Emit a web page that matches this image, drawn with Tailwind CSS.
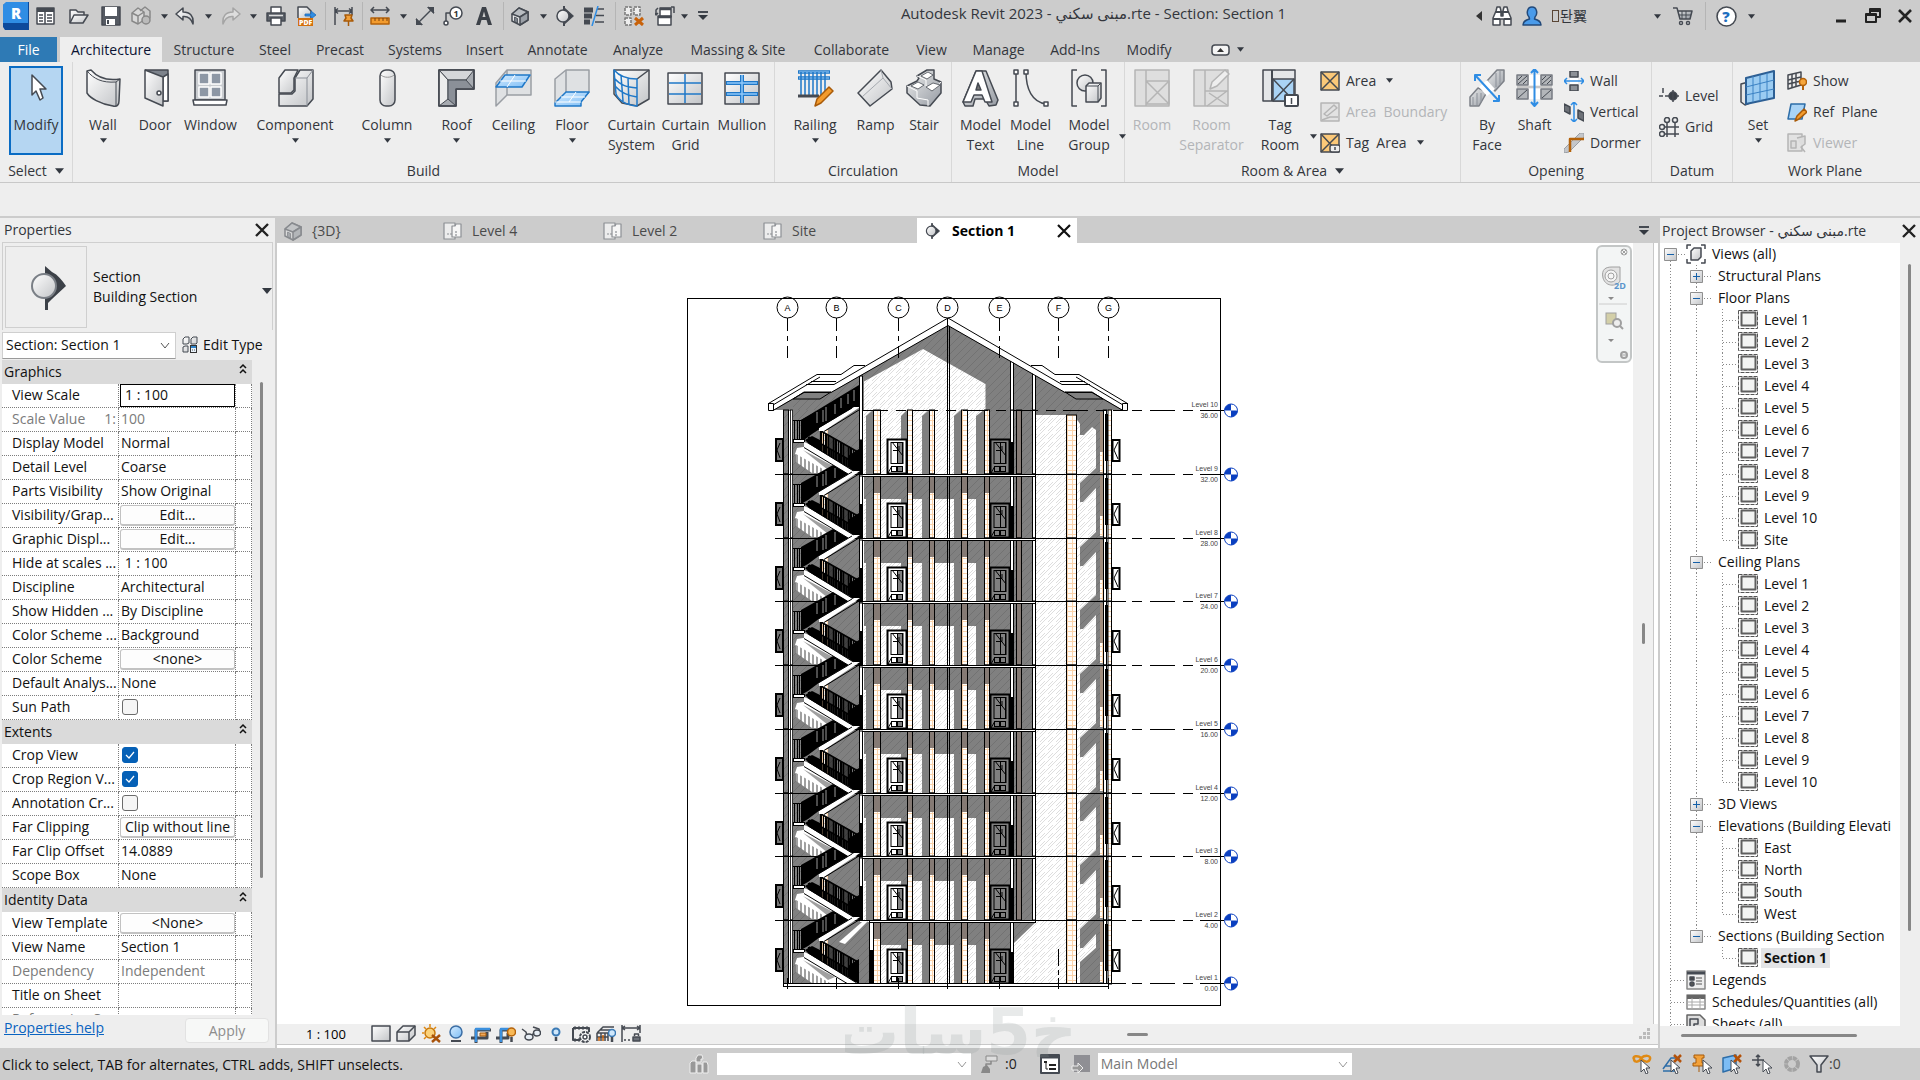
<!DOCTYPE html>
<html lang="en">
<head>
<meta charset="utf-8">
<title>Autodesk Revit 2023</title>
<script src="https://cdn.jsdelivr.net/npm/@tailwindcss/browser@4"></script>
</head>
<body class="bg-[#eeeeee]">
<svg class="absolute h-0 w-0" aria-hidden="true">
  <defs>
    <linearGradient id="lg" x1="0" y1="0" x2="1" y2="1"><stop offset="0" stop-color="#ffffff"/><stop offset="1" stop-color="#c2c4c7"/></linearGradient>
    <linearGradient id="dg" x1="0" y1="0" x2="1" y2="1"><stop offset="0" stop-color="#eceded"/><stop offset="1" stop-color="#969ba3"/></linearGradient>
    <linearGradient id="bg" x1="0" y1="0" x2="1" y2="1"><stop offset="0" stop-color="#d6ecff"/><stop offset="1" stop-color="#7dbdf5"/></linearGradient>
  </defs>
</svg>
<div class="flex h-screen flex-col overflow-hidden font-['Open_Sans','DejaVu_Sans','Noto_Sans_CJK_KR',sans-serif] text-[14px] leading-5 text-[#33363c]">

  <header class="shrink-0 bg-[#cccccc]">
    <div class="flex h-[37px] items-start">
      <div id="quick" class="flex h-8 shrink-0 items-center"></div>
      <h1 class="h-[26px] flex-1 text-center text-[15px] leading-[26px] whitespace-nowrap">Autodesk Revit 2023 - مبنى سكني.rte - Section: Section 1</h1>
      <div id="account" class="flex h-8 shrink-0 items-center"></div>
    </div>
    <nav id="tabs" class="flex h-[25px] items-stretch"></nav>
  </header>

  <section class="h-[154px] shrink-0">
    <div id="ribbon" class="flex h-[121px] border-b border-[#c8c8c8]"></div>
  </section>

  <main class="flex min-h-0 flex-1 border-t-2 border-[#cccccc]">
    <aside class="flex w-[277px] shrink-0 flex-col border-r-2 border-[#cccccc] text-[#111111]">
      <div class="flex h-6 shrink-0 items-center justify-between pr-[5px] pl-1 text-[#33363c]">
        <h2>Properties</h2>
        <button aria-label="Close properties"><svg class="h-4 w-4" viewBox="0 0 16 16"><path d="M2 2L14 14M14 2L2 14" stroke="#222" stroke-width="2.4"/></svg></button>
      </div>
      <div class="mx-[2px] flex h-[88px] shrink-0 items-center border border-b-0 border-[#cfcfcf]">
        <div class="ml-[2px] flex h-[82px] w-[82px] shrink-0 items-center justify-center border border-[#cfcfcf]">
          <svg class="h-12 w-12" viewBox="0 0 48 48"><path d="M23 3L30 9C36 12 40 17 44 23L30 36L26 40V47H23Z" fill="#3c4148"/><circle cx="22" cy="23" r="12" fill="url(#lg)" stroke="#7a7f86" stroke-width="2"/></svg>
        </div>
        <div class="ml-[6px] flex-1">Section<br>Building Section</div>
        <button aria-label="Change type" class="mt-2"><svg class="h-2 w-2.5" viewBox="0 0 10 8"><path d="M0 1H10L5 7Z" fill="#333840"/></svg></button>
      </div>
      <div class="flex h-[30px] shrink-0 items-center">
        <div class="relative ml-[2px] w-[174px]">
          <select aria-label="Instance" class="h-[27px] w-full appearance-none border border-[#cfcfcf] border-b-[#9a9a9a] bg-white pl-[3px]"><option>Section: Section 1</option></select>
          <svg class="pointer-events-none absolute top-2.5 right-1.5 h-2 w-2.5" viewBox="0 0 10 8"><path d="M1 1L5 6L9 1" fill="none" stroke="#555"/></svg>
        </div>
        <button class="ml-[5px] flex items-center gap-1 whitespace-nowrap"><svg class="h-[18px] w-[18px]" viewBox="0 0 18 18"><path d="M2 3L4 1H8V7L6 8H2ZM10 3L12 1H16V7L15 8H10ZM2 11L4 10H7V16H2Z" fill="url(#lg)" stroke="#444a52"/><rect x="9.500" y="9.500" width="6" height="7" fill="#e8f2fb" stroke="#333"/><path d="M10 11H15" stroke="#2f83c9" stroke-width="2"/><path d="M11 14H15" stroke="#555" stroke-dasharray="1 1"/></svg>Edit Type</button>
      </div>
      <div class="flex min-h-0 flex-1">
        <div class="ml-[2px] w-[250px] shrink-0 overflow-hidden bg-white">
          <table class="w-full table-fixed border-separate border-spacing-0 text-left font-normal">
            <colgroup><col class="w-[117px]"><col class="w-[117px]"><col></colgroup>
            <tbody id="props"></tbody>
          </table>
        </div>
        <div class="flex-1 pt-[22px] pl-2"><div class="h-[496px] w-[3px] rounded bg-[#878787]"></div></div>
      </div>
      <div class="flex h-[33px] shrink-0 items-center justify-between pr-[6px] pl-1">
        <a href="#help" class="-mt-2 text-[#0a63c0] underline">Properties help</a>
        <button disabled class="-mt-0.5 h-[25px] w-[84px] rounded border border-[#e2e2e2] bg-[#f7f8f7] text-[#8d8d8d]">Apply</button>
      </div>
    </aside>

    <section class="flex min-w-0 flex-1 flex-col">
      <div id="views" class="flex h-[25px] shrink-0 items-stretch bg-[#cccccc]"></div>
      <div class="flex min-h-0 flex-1">
        <div class="relative min-w-0 flex-1 bg-white">
          <svg id="drawing" class="h-full w-full" viewBox="277 243 1356 781" preserveAspectRatio="xMidYMid meet"></svg>
          <div class="absolute top-[2px] right-[1px] flex h-[118px] w-9 flex-col items-center rounded-md border-2 border-[#c3c6c6] bg-[#f3f5f5]">
            <svg class="h-[114px] w-8" viewBox="0 0 32 114" fill="none" stroke="#a0a0a0"><circle cx="26" cy="5" r="3"/><path d="M24 3L28 7M28 3L24 7M24 108H28"/><circle cx="26" cy="108" r="3" stroke-width="2"/><path d="M5 31C3 22 8 20 14 20H22V34C20 39 8 41 5 31Z" fill="#e2e2e2"/><circle cx="13" cy="29" r="6" fill="#f5f5f5"/><circle cx="13" cy="29" r="3"/><text x="16" y="42" font-size="9" font-weight="700" fill="#5b95cc" stroke="none">2D</text><path d="M10 50H16L13 53ZM10 92H16L13 95Z" fill="#8a8a8a" stroke="none"/><path d="M1 57H29" stroke="#ccc"/><rect x="8" y="66" width="10" height="11" fill="#d3cfa8"/><circle cx="19" cy="76" r="4" fill="#eee" stroke-width="2"/><path d="M22 79L25 82" stroke-width="2"/></svg>
          </div>
        </div>
        <div class="flex w-[21px] shrink-0 items-center justify-center border-r border-[#c8c8c8] bg-[#f0f0f0]"><div class="h-[21px] w-[3px] rounded bg-[#878787]"></div></div>
        <div class="w-1 bg-white"></div>
      </div>
      <div class="flex h-[21px] shrink-0 items-center border-b border-[#c8c8c8] bg-[#efefef]">
        <div class="w-[91px] pl-[29px] text-[13px] whitespace-nowrap text-black">1 : 100</div>
        <div id="viewbar" class="flex"></div>
        <div class="ml-[484px] h-[3px] w-[21px] rounded bg-[#878787]"></div>
        <svg class="mr-2 ml-auto h-3 w-3" viewBox="0 0 12 12" fill="#bbb"><path d="M9 0h3v3h-3zM9 4h3v3h-3zM9 8h3v3h-3zM5 4h3v3h-3zM5 8h3v3h-3zM1 8h3v3h-3z"/></svg>
      </div>
      <div class="h-[3px] shrink-0 bg-white"></div>
    </section>

    <aside class="flex w-[262px] shrink-0 flex-col border-l-2 border-[#cccccc] text-[#111111]">
      <div class="flex h-[25px] shrink-0 items-center justify-between pr-[3px] pl-[2px] text-[#33363c]">
        <h2 class="whitespace-nowrap">Project Browser - مبنى سكني.rte</h2>
        <button aria-label="Close project browser"><svg class="h-4 w-4" viewBox="0 0 16 16"><path d="M2 2L14 14M14 2L2 14" stroke="#222" stroke-width="2.4"/></svg></button>
      </div>
      <div class="flex min-h-0 flex-1">
        <ul id="tree" class="w-[240px] shrink-0 overflow-hidden bg-white"></ul>
        <div class="flex-1 pt-[21px] pl-2"><div class="h-[667px] w-[3px] rounded bg-[#878787]"></div></div>
      </div>
      <div class="h-[22px] shrink-0 pt-2 pl-[21px]"><div class="h-[3px] w-[176px] rounded bg-[#878787]"></div></div>
    </aside>
  </main>

  <footer class="relative flex h-8 shrink-0 items-center bg-[#cccccc] text-[#111111]">
    <p class="w-[688px] shrink-0 pt-0.5 pl-[2px] whitespace-nowrap">Click to select, TAB for alternates, CTRL adds, SHIFT unselects.</p>
    <div id="status" class="flex flex-1 items-center"></div>
    <div dir="rtl" class="pointer-events-none absolute -top-[51px] left-[845px] h-[60px] w-[232px] overflow-hidden text-center font-['DejaVu_Sans',sans-serif] text-[64px] leading-[70px] font-bold text-[#8a9494]/20">خ5سات</div>
  </footer>
</div>

<script>
const svg = (cls, box, body) => `<svg class="${cls} shrink-0" viewBox="0 0 ${box}" fill="none" stroke="#454a52" stroke-width="1.5" stroke-linejoin="round">${body}</svg>`;
const s20 = b => svg('h-5 w-5', '20 20', b);
const L = 'fill="url(#lg)"', D = 'fill="url(#dg)"', B = 'fill="url(#bg)"', BL = 'stroke="#1f78c8"';
const caret = (cls) => `<svg class="${cls} shrink-0" viewBox="0 0 8 5"><path d="M0 0H8L4 5Z" fill="#333840"/></svg>`;
const caretBtn = w => `<button aria-label="More" class="${w} flex justify-center">${caret('h-[5px] w-[7px]')}</button>`;
const btn = (w, label, icon) => `<button aria-label="${label}" class="${w} flex justify-center">${icon}</button>`;
const sep = '<div class="mx-[2px] h-7 w-px border-r border-[#b5b5b5] pr-px"></div>';
const house = `<path d="M2 8L9 2L18 6V14L10 19L2 15Z" ${L}/><path d="M2 8L9 2L18 6L10 11Z" fill="#b9bdc2"/><path d="M10 11L18 6V14L10 19Z" fill="#9ca1a8"/><path d="M4.500 11L7.500 12.500V17L4.500 15.500Z" fill="#7d838c" stroke-width=".8"/>`;
const section = `<path d="M10 0V20" stroke-width="2"/><path d="M10 2L19 10L10 18Z" fill="#3c4148"/><circle cx="9" cy="10" r="6" ${L}/>`;

document.getElementById('quick').innerHTML = [
  btn('w-8', 'Revit menu', svg('h-[28px] w-[26px]', '26 28', '<path d="M0 3L4 0H26V28H2L0 25Z" fill="#0d4a9b" stroke="none"/><path d="M0 3L3 0H25V21H0Z" fill="#2f8de4" stroke="none"/><text x="8" y="17" font-size="15" font-weight="800" fill="#fff" stroke="none">R</text>')),
  btn('w-7', 'Home', s20(`<rect x="1" y="2" width="17" height="16" fill="#fff"/><path d="M1 4H18" stroke-width="4"/><path d="M3 9H7M3 12H7M3 15H7M9 5V18" /><path d="M11 9H16M11 12H16M11 15H16"/>`)),
  btn('w-[38px]', 'Open', s20(`<path d="M1 17V4H7L9 6H15V9" ${L}/><path d="M1 17L5 9H19L14 17Z" ${L}/>`)),
  btn('w-[26px]', 'Save', s20(`<path d="M1 1H19V19H1Z" fill="#555a62"/><rect x="4" y="1" width="12" height="9" fill="#fff" stroke="none"/><rect x="5" y="13" width="9" height="6" fill="#fff" stroke="none"/><path d="M7 14V18" stroke-width="2"/>`)),
  btn('w-[34px]', 'Synchronize', s20(`<g stroke="#888"><path d="M1 7L7 2L13 6V14L7 18L1 15Z" fill="#d8d8d8"/><path d="M1 7L7 10L13 6M7 10V18M9 5L14 1L19 5V12L14 16"/><circle cx="15" cy="14" r="4" fill="#bbb"/></g>`)),
  caretBtn('w-3'),
  btn('w-[30px]', 'Undo', s20(`<path d="M1 8L8 2V6C15 6 19 10 18 18C16 12 13 10 8 10.500V14Z" ${L}/>`)),
  caretBtn('w-4'),
  btn('w-[30px]', 'Redo', s20(`<path d="M19 8L12 2V6C5 6 1 10 2 18C4 12 7 10 12 10.500V14Z" fill="#ddd" stroke="#a5a5a5"/>`)),
  caretBtn('w-[14px]'),
  btn('w-[31px]', 'Print', s20(`<path d="M5 7V1H15V7" fill="#fff"/><path d="M1 7H19V15H1Z" fill="#5b6068"/><path d="M5 12H15V19H5Z" fill="#fff"/><path d="M3 9.500H17" stroke="#ddd"/>`)),
  btn('w-[31px]', 'Export PDF', s20(`<path d="M1 12V1H10L14 5V12" ${L}/><path d="M8 8H14V5L19 9L14 13V10H8Z" fill="#2f8de4" stroke="#1f6bb5" stroke-width=".8"/><rect x="1" y="12" width="15" height="8" fill="#d4700c" stroke="none"/><text x="2" y="19" font-size="7" font-weight="800" fill="#fff" stroke="none">PDF</text>`)),
  sep,
  btn('w-[31px]', 'Aligned dimension', s20(`<path d="M1 1V19M18 1V9M1 5H18M4 2.500L1 5L4 7.500M15 2.500L18 5L15 7.500"/><path d="M11 9H18L17 12L19 15H10L12 12ZM14.500 15V20" fill="#f2a13a" stroke="#a85a08"/>`)),
  sep,
  btn('w-[29px]', 'Measure', s20(`<path d="M1 4H19M4 1L1 4L4 7M16 1L19 4L16 7"/><rect x="1" y="12" width="18" height="6" fill="#f29b2e" stroke="#b4620a"/><path d="M5 12V15M9 12V15M13 12V15M17 12V15" stroke="#7c430a" stroke-width="1"/>`)),
  caretBtn('w-[18px]'),
  btn('w-[26px]', 'Dimension', s20(`<path d="M3 17L17 3"/><path d="M1 19V12L8 19ZM19 1H12L19 8Z" fill="#454a52" stroke="none"/><path d="M1 13L7 19M13 1L19 7"/>`)),
  btn('w-[30px]', 'Tag', s20(`<circle cx="13" cy="7" r="6" fill="#fff"/><path d="M7 7H3V15"/><circle cx="3" cy="17" r="2" fill="#fff"/><text x="10.500" y="10.500" font-size="9" font-weight="700" fill="#333" stroke="none">1</text>`)),
  btn('w-[32px]', 'Text', s20(`<path d="M2 19L8 1H12L18 19H14L12.500 14H7.500L6 19Z" fill="#3c4148" stroke="none"/><path d="M8.500 11L10 5.500L11.500 11Z" fill="#ccc" stroke="none"/>`)),
  sep,
  btn('w-7', '3D view', s20(house)),
  caretBtn('w-[18px]'),
  btn('w-6', 'Section', s20(section)),
  btn('w-[36px]', 'Thin lines', s20(`<path d="M0 4H9M0 10H8M0 16H6" stroke-width="5"/><path d="M13 3H20M12 9.500H20M11 16H20"/><path d="M14 0L8 20" stroke="#2f8de4"/>`)),
  sep,
  btn('w-[32px]', 'Close inactive views', s20(`<path d="M1 1H7V9H1ZM10 1H16V9H10ZM1 12H7V19H1Z" stroke="#777" fill="#eee" stroke-dasharray="3 1"/><path d="M11 12L19 19M19 12L11 19" stroke="#c8620a" stroke-width="3"/>`)),
  btn('w-[30px]', 'Switch windows', s20(`<rect x="5" y="2" width="11" height="9" fill="#fff"/><path d="M5 3H16" stroke-width="2.500"/><rect x="3" y="10" width="13" height="9" fill="#fff"/><path d="M3 11H16" stroke-width="2.500"/><path d="M1 9V4L3 2M0 7L1 9L3 7M16 1H19V7"/>`)),
  caretBtn('w-[9px]'),
  btn('w-7', 'Customize', svg('h-[10px] w-[10px]', '10 10', '<path d="M0 1H10" stroke-width="2"/><path d="M0 4H10L5 9Z" fill="#333840" stroke="none"/>')),
].join('');

document.getElementById('account').innerHTML = [
  btn('w-[18px]', 'Collapse search', svg('h-[10px] w-[6px]', '6 10', '<path d="M6 0V10L0 5Z" fill="#333" stroke="none"/>')),
  btn('w-[28px]', 'Search', svg('h-5 w-5', '20 20', `<path d="M4 5L5 1H8L9 5V10H11V5L12 1H15L16 5L19 12V19H12V13H8V19H1V12Z" fill="#fff"/><path d="M1 13H8M12 13H19M3 6H9M11 6H17M10 5V10" stroke-width="2"/>`)),
  btn('w-[32px]', 'Sign in', s20(`<path d="M1 19C1 15 4 14 7.500 13L7 11C4 8 5 1 10 1C15 1 16 8 13 11L12.500 13C16 14 19 15 19 19Z" fill="#4a9bea" stroke="#234a7a"/>`)),
  '<a href="#account" class="flex h-5 w-[102px] items-center pl-1 text-[14px] leading-5"><span class="mr-px inline-block h-3 w-[7px] border border-[#5a4636]"></span>돤翼</a>',
  caretBtn('w-[14px]'),
  btn('w-[38px]', 'App store', s20(`<path d="M0 2H4L7 13H17L19 5H5" ${D}/><path d="M6 9H18M9 5V13M13 5V13" stroke-width="1"/><circle cx="8" cy="17" r="1.500" fill="#fff"/><circle cx="15" cy="17" r="1.500" fill="#fff"/>`)),
  sep,
  btn('w-[36px]', 'Help', svg('h-[21px] w-[21px]', '20 20', `<circle cx="10" cy="10" r="9" fill="#fff"/><text x="6" y="15" font-size="14" font-weight="800" fill="#1f6fc0" stroke="none">?</text>`)),
  caretBtn('w-[14px]'),
  '<div class="w-[68px]"></div>',
  btn('w-[30px]', 'Minimize', svg('h-4 w-4', '16 16', '<path d="M3 13H13" stroke="#222" stroke-width="3"/>')),
  btn('w-[34px]', 'Restore', svg('h-4 w-4', '16 16', '<path d="M5 5V1H15V9H11M5 3H15" stroke="#222" stroke-width="2"/><path d="M1 6H11V14H1ZM1 7H11" stroke="#222" stroke-width="2"/>')),
  btn('w-[30px]', 'Close', svg('h-4 w-4', '16 16', '<path d="M2 2L14 14M14 2L2 14" stroke="#222" stroke-width="2.600"/>')),
].join('');

document.getElementById('tabs').innerHTML =
  '<button class="w-[57px] bg-[#2e7ab5] text-white">File</button><button class="ml-[3px] w-[102px] bg-[#eeeeee] text-[#0b1233]">Architecture</button>' +
  [['w-[84px]','Structure'],['w-[58px]','Steel'],['w-[72px]','Precast'],['w-[78px]','Systems'],['w-[61px]','Insert'],['w-[85px]','Annotate'],['w-[76px]','Analyze'],['w-[124px]','Massing &amp; Site'],['w-[103px]','Collaborate'],['w-[57px]','View'],['w-[77px]','Manage'],['w-[76px]','Add-Ins'],['w-[72px]','Modify']]
    .map(([w, t]) => `<button class="${w} whitespace-nowrap">${t}</button>`).join('') +
  `<button aria-label="Ribbon display" class="ml-[26px] flex items-center gap-[7px]">${svg('h-3 w-[19px]', '19 12', '<rect x="1" y="1" width="17" height="10" rx="3" fill="#f4f4f4"/><path d="M6 8H13L9.500 4Z" fill="#333" stroke="none"/>')}${caret('h-[5px] w-[7px]')}</button>`;

const big = {
  modify: `<path d="M14 6V26L18 22L22 31L25 29L22 20H28Z" fill="#fff"/>`,
  wall: `<path d="M2 2L6 1C12 8 22 12 35 10L34 32C34 36 32 38 28 37C15 35 5 29 2 24Z" ${L}/><path d="M2 2C9 10 17 14 31 13V37M31 13L35 10" stroke-width="1"/>`,
  door: `<path d="M8 1H31V32H26" fill="#7d838c"/><path d="M26 8L31 5V32H26Z" fill="#fff"/><path d="M8 1L26 8V37L8 29Z" ${L}/><circle cx="22" cy="24" r="2" fill="#fff"/>`,
  window: `<rect x="3" y="1" width="30" height="30" fill="#c9ccd0"/><path d="M7 4H17V15H7ZM19 4H29V15H19ZM7 18H17V28H7ZM19 18H29V28H19Z" fill="#8d97a5" stroke="#fff"/><path d="M1 31H35L34 36H2Z" fill="#fff"/>`,
  component: `<path d="M2 9L8 1H21L17 9V21L14 24H2Z" ${L}/><path d="M2 25H15L18 22V9L23 1H36V30L30 37H2Z" ${L}/><path d="M18 9H30V37M30 9L36 1" stroke="#8b9098" stroke-width="1"/>`,
  column: `<rect x="11" y="1" width="15" height="36" rx="6" ${L}/><path d="M12 6C15 9 22 9 25 6" stroke="#999" stroke-width="1"/>`,
  roof: `<path d="M1 1H36V20H18V37H1Z" fill="#a7abb1"/><path d="M1 1H36L28 11H10Z" fill="#d5d7da" stroke-width="1"/><path d="M1 1L10 11V30L1 37Z" fill="#eceded" stroke-width="1"/><path d="M28 11L36 20H18V37L10 30V11Z" fill="#8b9098" stroke-width="1"/><path d="M1 1H36V20H18V37H1Z"/>`,
  ceiling: `<path d="M1 14L12 1H36V26H12L1 37Z" fill="#dfe1e3" stroke="#9a9ea4"/><path d="M12 1V26" stroke="#9a9ea4"/><path d="M1 18L10 6H35L27 18Z" ${B} ${BL}/><path d="M5 12H31M12 18L20 6" stroke="#fff" stroke-width="1"/>`,
  floor: `<path d="M1 10L12 1H35V23L26 33H1Z" fill="#dfe1e3" stroke="#9a9ea4"/><path d="M12 1V23" stroke="#9a9ea4"/><path d="M1 34L12 23H35L27 33V37H1Z" ${B} ${BL}/><path d="M1 33H27M7 28H31M15 33L22 23" stroke="#fff" stroke-width="1"/>`,
  csys: `<path d="M1 1H36V30L24 37L9 34L1 25Z" ${L}/><path d="M24 10L36 1"/><path d="M1 1C7 8 14 10 24 10V37C14 36 6 32 3 25ZM1 9C8 17 14 18 24 19M2 17C9 25 16 27 24 28M8 6L10 32M15 9L16 36" ${BL}/>`,
  cgrid: `<rect x="1" y="4" width="34" height="31" ${L}/><path d="M18 5V34M2 14H34M2 25H34" ${BL}/>`,
  mullion: `<rect x="1" y="4" width="34" height="31" ${L}/><path d="M18 6V34M2 14H34M2 25H34" stroke="#1f78c8" stroke-width="4"/><path d="M18 6V34M3 14H33M3 25H33" stroke="#8fc8fa"/>`,
  railing: `<path d="M1 3H33M1 9H33" stroke="#1f78c8" stroke-width="3.500"/><path d="M2 3H32M2 9H32" stroke="#a5d2fa" stroke-width="1"/><path d="M4 3V26M8 3V26M12 3V26M16 3V26M20 3V26M24 3V26M28 3V24" stroke="#1f78c8" stroke-width="1.500"/><path d="M1 27H22" stroke-width="3"/><path d="M18 37L20 30L32 18L36 22L24 34Z" fill="#f29b2e" stroke="#a85a08"/>`,
  ramp: `<path d="M1 24L24 1L34 13L35 20L13 37Z" ${L}/><path d="M24 1L26 9L35 20M26 9L5 28" stroke="#a5a9af" stroke-width="1"/>`,
  stair: `<path d="M1 17L11 12L13 9L11 7L21 1H28V10L35 13V24L24 37L14 36L1 24Z" ${D}/><path d="M1 17L11 22V29L22 31V37M11 7L20 11L20 17L29 20L35 13" stroke="#fff" stroke-width="1"/><path d="M5 17L12 13L18 16L12 20ZM15 7L22 3L27 6L21 10Z" fill="#fff" stroke-width=".8"/><path d="M20 18L27 14L34 16L26 22Z" fill="#fff" stroke-width=".8"/>`,
  mtext: `<path d="M1 33L14 2H24L36 31L34 36L27 37L23 30H13L11 37H3Z" ${D}/><path d="M1 33L14 2H20L30 33H23L20 26H12L9 33Z" fill="#fff"/><path d="M14 21L16 14L19 21Z" fill="#777"/>`,
  mline: `<path d="M4 3V34M14 3C14 20 20 33 34 35"/><path d="M2 1H6V5H2ZM12 1H16V5H12ZM2 33H6V37H2ZM32 33H36V37H32Z" fill="#fff"/>`,
  mgroup: `<path d="M6 1H1V37H6M30 1H35V37H30"/><circle cx="14" cy="14" r="8" ${L}/><path d="M15 17L18 14H30V29L27 33H15Z" ${L}/><path d="M15 17H27V33M27 17L30 14" stroke-width="1"/>`,
  room: `<g stroke="#b5b5b5"><rect x="1" y="1" width="34" height="36" fill="#dedede"/><path d="M12 1V37M12 12H35V35H12ZM12 12L35 35M35 12L12 35"/></g>`,
  rsep: `<g stroke="#b5b5b5"><rect x="1" y="1" width="34" height="36" fill="#dedede"/><path d="M12 1V37M12 22H35M14 37L34 22M16 24L34 36"/><path d="M17 20L19 13L32 1L36 5L24 17Z" fill="#eee"/></g>`,
  tag: `<rect x="1" y="1" width="32" height="31" fill="#e4e6e8"/><path d="M10 1V32" stroke-width="2"/><path d="M11 10H32V32H11Z" fill="#a9d3f5"/><path d="M11 10L32 32M32 10L11 32"/><rect x="23" y="26" width="13" height="11" rx="1" fill="#fff" stroke-width="2"/><path d="M29.500 29V35"/>`,
  byface: `<path d="M1 28L9 19L18 23L10 37H1Z" ${D} stroke="#7d8188"/><path d="M18 12L28 1H35V12L26 22Z" ${D} stroke="#7d8188"/><path d="M4 28V36M8 24V36M12 24V33M27 4V18M31 2V15" stroke="#8b9098" stroke-width="1"/><path d="M10 18L18 11L26 20L18 27Z" fill="#fff" stroke="none"/><path d="M6 6L30 32M6 12V6H12M30 26V32H24" stroke="#2f8de4" stroke-width="2"/>`,
  shaft: `<path d="M1 6H12V16H1ZM25 6H36V16H25ZM1 20H12V30H1ZM25 20H36V30H25Z" fill="#b3b6ba" stroke="#777b82"/><path d="M2 15L11 7M2 29L11 21M26 15L35 7M26 29L35 21M2 11L6 7M7 15L11 11M26 11L30 7M31 15L35 11" stroke-width="1"/><path d="M1 18H36" stroke="#bbb"/><rect x="13" y="6" width="11" height="10" fill="#fff" stroke="none"/><rect x="13" y="20" width="11" height="10" fill="#fff" stroke="none"/><path d="M18.500 1V36M15 4L18.500 0L22 4M15 33L18.500 37L22 33" stroke="#2f8de4" stroke-width="2"/>`,
  set: `<path d="M1 15L12 12V33L5 36L1 33Z" fill="#e5e5e5"/><path d="M6 9L34 2V29L6 35Z" fill="#9bccf2" stroke="#2d5f94" stroke-width="2"/><path d="M13 7V33M20 6V32M27 4V30M6 18L34 11M6 26L34 20" stroke="#3b82c4" stroke-width="1"/>`,
};
const small = {
  area: `<rect x="1" y="1" width="18" height="18" fill="#fbc878"/><path d="M1 1L19 19M19 1L1 19"/>`,
  abound: `<g stroke="#b5b5b5"><rect x="1" y="1" width="18" height="18" fill="#e2e2e2"/><path d="M4 12L14 3L17 6L7 14ZM2 18L10 15H18"/></g>`,
  tarea: `<rect x="1" y="1" width="18" height="18" fill="#fbc878"/><path d="M1 1L14 15M19 1L1 19"/><rect x="10" y="12" width="10" height="7" rx="2" fill="#eee"/><path d="M15 14V17"/>`,
  owall: `<path d="M6 0H14V6H6ZM6 14H14V20H6Z" fill="#8c9096"/><rect x="6" y="7" width="8" height="6" fill="#fff" stroke="none"/><path d="M0 10H20M3 7L0 10L3 13M17 7L20 10L17 13" stroke="#2f8de4"/>`,
  overt: `<path d="M0 2L6 5V12L0 9ZM14 8L20 11V19L14 16Z" fill="#6d7178"/><path d="M10 0V20M7 3L10 0L13 3M7 17L10 20L13 17" stroke="#2f8de4"/>`,
  odorm: `<path d="M0 20V16L16 0H20V4L5 19Z" fill="#c3c6ca" stroke="#9a9ea4" stroke-width="1"/><path d="M6 19V6H20" stroke="#b4620a" stroke-width="2.500"/>`,
  level: `<path d="M0 10H20" stroke-dasharray="4 2"/><circle cx="14" cy="10" r="4" fill="#3c4148"/><path d="M14 4V16M4 2V7"/>`,
  grid: `<circle cx="8" cy="3" r="2.500"/><circle cx="16" cy="3" r="2.500"/><circle cx="3" cy="10" r="2.500"/><circle cx="3" cy="17" r="2.500"/><path d="M8 6V20M16 6V20M6 10H20M6 17H20"/>`,
  show: `<path d="M1 4L14 1V14L1 18Z" fill="#eee"/><path d="M5 3V17M9 2V16M1 9L14 6M1 13L14 10"/><circle cx="16" cy="11" r="3.500" fill="#f6a63c" stroke="#b4620a"/><path d="M16 15V19" stroke="#b4620a" stroke-width="2"/>`,
  refp: `<path d="M4 2H18L15 17H1Z" fill="#a9d3f5" stroke="#2d6da8"/><path d="M8 19L10 14L17 7L20 10L12 17Z" fill="#f29b2e" stroke="#a85a08"/>`,
  viewer: `<g stroke="#b5b5b5"><rect x="1" y="1" width="14" height="17" fill="#e2e2e2"/><path d="M10 5L18 3V11L14 14L18 19M4 8H9V15H4Z" fill="#ddd"/></g>`,
};
const bigBtn = ([w, icon, label, o = '']) => {
  const dis = o.includes('d');
  return `<button ${dis ? 'disabled' : ''} class="${w} relative flex shrink-0 flex-col items-center whitespace-nowrap ${dis ? 'text-[#b3b5b8]' : ''}">${svg('h-[38px] w-[37px]', '37 38', big[icon])}<span class="mt-2">${label}</span>${o.includes('c') ? caret('mt-[3px] h-[5px] w-[7px]') : ''}${o.includes('r') ? '<span class="absolute -right-1 bottom-4">' + caret('h-[5px] w-[7px]') + '</span>' : ''}</button>`;
};
const smBtn = ([icon, label, o = '']) =>
  `<button ${o.includes('d') ? 'disabled' : ''} class="flex h-[31px] items-center gap-[6px] whitespace-nowrap ${o.includes('d') ? 'text-[#b3b5b8]' : ''}">${s20(small[icon])}<span>${label}</span>${o.includes('c') ? caret('ml-1 h-[5px] w-[7px]') : ''}</button>`;
const panel = (w, pad, bigs, smalls, title, scls = '', c = false, edge = 'border-r') =>
  `<div class="${w} ${edge} flex shrink-0 flex-col border-[#d8d8d8]"><div class="flex h-[99px] items-start ${pad}">${bigs.map(b => bigBtn(b)).join('')}${smalls.length ? `<div class="flex flex-col ${scls}">${smalls.map(smBtn).join('')}</div>` : ''}</div><div class="flex items-center justify-center gap-2 leading-5">${title}${c ? caret('h-[6px] w-[9px]') : ''}</div></div>`;
document.getElementById('ribbon').innerHTML =
  `<div class="flex w-[73px] shrink-0 flex-col items-center border-r border-[#d8d8d8]"><div class="flex h-[99px] items-start pt-1"><button class="flex h-[89px] w-[54px] flex-col items-center border-2 border-[#0a6cc4] bg-[#b5d6f2] pt-px whitespace-nowrap">${svg('h-[38px] w-[37px]', '37 38', big.modify)}<span class="mt-2">Modify</span></button></div><div class="flex items-center gap-2">Select ${caret('h-[6px] w-[9px]')}</div></div>` +
  panel('w-[702px]', 'pt-[7px] pl-[6px]', [['w-[48px]','wall','Wall','c'],['w-[56px]','door','Door'],['w-[55px]','window','Window'],['w-[114px]','component','Component','c'],['w-[70px]','column','Column','c'],['w-[69px]','roof','Roof','c'],['w-[45px]','ceiling','Ceiling'],['w-[72px]','floor','Floor','c'],['w-[47px]','csys','Curtain<br>System'],['w-[61px]','cgrid','Curtain<br>Grid'],['w-[52px]','mullion','Mullion']], [], 'Build') +
  panel('w-[177px]', 'pt-[7px] pl-[5px]', [['w-[70px]','railing','Railing','c'],['w-[51px]','ramp','Ramp'],['w-[46px]','stair','Stair']], [], 'Circulation') +
  panel('w-[173px]', 'pt-[7px] pl-[4px]', [['w-[49px]','mtext','Model<br>Text'],['w-[51px]','mline','Model<br>Line'],['w-[66px]','mgroup','Model<br>Group','r']], [], 'Model') +
  panel('w-[336px]', 'pt-[7px] pl-[3px]', [['w-[48px]','room','Room','d'],['w-[71px]','rsep','Room<br>Separator','d'],['w-[66px]','tag','Tag<br>Room','r']], [['area','Area','c'],['abound','Area&nbsp; Boundary','d'],['tarea','Tag&nbsp; Area','c']], 'Room &amp; Area', '-mt-[4px] ml-[7px]', true) +
  panel('w-[191px]', 'pt-[7px] pl-[3px]', [['w-[46px]','byface','By<br>Face'],['w-[49px]','shaft','Shaft']], [['owall','Wall'],['overt','Vertical'],['odorm','Dormer']], 'Opening', '-mt-[4px] ml-[5px]') +
  panel('w-[81px]', 'pt-[7px] pl-[7px]', [], [['level','Level'],['grid','Grid']], 'Datum', 'mt-[11px]') +
  panel('w-[184px]', 'pt-[7px] pl-[2px]', [['w-[46px]','set','Set','c']], [['show','Show'],['refp','Ref&nbsp; Plane'],['viewer','Viewer','d']], 'Work Plane', '-mt-[4px] ml-[6px]', false, '');

/* Properties table: [label, value, kind] */
const chev = '<svg class="-mt-1.5 h-3 w-2.5" viewBox="0 0 10 12"><path d="M2 5L5 2L8 5M2 10L5 7L8 10" fill="none" stroke="#111" stroke-width="1.5"/></svg>';
const rows = [['#','Graphics'],['View Scale','1 : 100','box'],['Scale Value','100','scale'],['Display Model','Normal'],['Detail Level','Coarse'],['Parts Visibility','Show Original'],['Visibility/Grap...','Edit...','btn'],['Graphic Displ...','Edit...','btn'],['Hide at scales ...','&nbsp;1 : 100'],['Discipline','Architectural'],['Show Hidden ...','By Discipline'],['Color Scheme ...','Background'],['Color Scheme','&lt;none&gt;','btn'],['Default Analys...','None'],['Sun Path','','off'],['#','Extents'],['Crop View','','on'],['Crop Region V...','','on'],['Annotation Cr...','','off'],['Far Clipping','Clip without line','btn'],['Far Clip Offset','14.0889'],['Scope Box','None'],['#','Identity Data'],['View Template','&lt;None&gt;','btn'],['View Name','Section 1'],['Dependency','Independent','dim'],['Title on Sheet',''],['Referencing S...','','dim']];
const cell = 'border-r border-b border-dotted border-[#7d7d7d]';
document.getElementById('props').innerHTML = rows.map(([a, b, k = ''], i) => {
  if (a === '#') return `<tr class="h-6 bg-[#dadada]"><th colspan="3" class="h-6 p-0 pr-1 pl-[2px] font-normal"><div class="flex h-6 items-center justify-between">${b}${chev}</div></th></tr>`;
  const tone = k === 'dim' || k === 'scale' ? 'text-[#7b7b7b]' : '';
  let v = b;
  if (k === 'btn') v = `<button class="block h-[21px] w-full rounded-[3px] border border-b-2 border-[#c2c2c2] bg-[#fdfdfd] text-center leading-[18px] whitespace-nowrap">${b}</button>`;
  if (k === 'box') v = `<input aria-label="${a}" value="${b}" class="block h-[23px] w-full border border-black bg-white pb-0.5 pl-1">`;
  if (k === 'on' || k === 'off') v = `<span class="relative ml-px block h-4 w-4"><input id="p${i}" type="checkbox" ${k === 'on' ? 'checked' : ''} class="block h-4 w-4 appearance-none rounded-[3px] border border-[#6a6a6a] bg-[#f5f5f5] checked:border-[#0560b6] checked:bg-[#0560b6]">${k === 'on' ? '<svg class="pointer-events-none absolute inset-0" viewBox="0 0 16 16"><path d="M4 8L7 11L12 5" fill="none" stroke="#fff" stroke-width="1.2"/></svg>' : ''}</span>`;
  const lab = k === 'scale' ? '<span class="flex justify-between pr-[2px]"><span>Scale Value</span><span>1:</span></span>' : (k === 'on' || k === 'off' ? `<label for="p${i}">${a}</label>` : a);
  return `<tr class="h-6 ${tone}"><th class="${cell} h-6 overflow-hidden pt-0 pr-0 pb-0.5 pl-[10px] font-normal whitespace-nowrap">${lab}</th><td class="${cell} h-6 overflow-hidden p-0 whitespace-nowrap ${k === 'btn' || k === 'box' ? 'pl-px' : 'pb-0.5 pl-[2px]'}">${v}</td><td class="${cell} p-0"></td></tr>`;
}).join('');

/* View tabs */
const sheet = `<g stroke="#8c8f94" stroke-width="1.2"><rect x="1" y="2" width="11" height="16" fill="#ececec"/><path d="M9 5H12L13 3H18V16H9Z" fill="#f6f6f6"/><path d="M4 13H9M13 10V15" stroke-dasharray="2 1"/></g>`;
document.getElementById('views').innerHTML =
  [['{3D}', `<g opacity=".5">${house}</g>`],['Level 4', sheet],['Level 2', sheet],['Site', sheet]].map(([t, ic]) => `<button class="flex w-[160px] items-center gap-[9px] pl-[6px] text-[#4a4a4a]">${s20(ic)}${t}</button>`).join('') +
  `<div class="flex w-[160px] items-center bg-white pl-[5px] font-bold text-black">${svg('h-4 w-5', '20 20', section)}<span class="ml-[10px] flex-1">Section 1</span><button aria-label="Close view" class="mr-[5px]"><svg class="h-4 w-4" viewBox="0 0 16 16"><path d="M2 2L14 14M14 2L2 14" stroke="#111" stroke-width="2.200"/></svg></button></div>
  <button aria-label="All views" class="mr-[9px] ml-auto">${svg('h-[10px] w-[10px]', '10 10', '<path d="M0 1H10" stroke-width="2"/><path d="M0 4H10L5 9Z" fill="#333840" stroke="none"/>')}</button>`;

/* View control bar */
document.getElementById('viewbar').innerHTML = [
  ['Detail level', '<rect x="1" y="2" width="18" height="15" fill="url(#lg)"/>'],
  ['Visual style', `<path d="M1 8L7 2H19V11L13 17H1Z" ${L}/><path d="M1 8H13V17M13 8L19 2"/>`],
  ['Sun path', '<circle cx="9" cy="9" r="5" fill="#fbd27a" stroke="#c8780c"/><path d="M9 0V3M1 9H3M3 3L5 5M15 3L13 5M3 15L5 13" stroke="#e08a14"/><path d="M11 11L19 18M19 11L11 18" stroke="#a8520a" stroke-width="2.500"/>'],
  ['Shadows', `<circle cx="10" cy="8" r="6" ${B} stroke="#3b6ea5"/><path d="M5 17H15" stroke-width="2"/>`],
  ['Crop view', '<path d="M5 19V6H20M0 14H16V8" stroke="#454a52" stroke-width="3"/><path d="M5 18V5H19" stroke="#3b8fdd" stroke-width="2.500"/><rect x="9" y="9" width="6" height="3" fill="#f2a95a" stroke="#a85a08" stroke-width="1"/>'],
  ['Show crop region', '<path d="M5 19V6H14M0 14H12V9" stroke="#454a52" stroke-width="3"/><path d="M5 18V5H13" stroke="#3b8fdd" stroke-width="2.500"/><circle cx="15.500" cy="8" r="4" fill="#f8b956" stroke="#b4620a"/><path d="M15.500 13V18" stroke-width="2.500"/>'],
  ['Temporary hide', '<path d="M1 5L5 8C6 11 6 13 4 13M12 3L18 5L19 9"/><ellipse cx="8" cy="13" rx="4" ry="3" fill="#e7eef5"/><ellipse cx="16" cy="9" rx="3.500" ry="3" fill="#e7eef5"/><path d="M11 11L13 9"/>'],
  ['Reveal hidden', '<circle cx="10" cy="8" r="3.500" fill="#cfe7fb" stroke="#3b7ab5" stroke-width="2"/><path d="M10 13V17" stroke-width="2.500"/>'],
  ['Temporary view', '<path d="M2 4H18V8M2 4V16H9" stroke-width="2"/><path d="M4 2V6M8 2V6M12 2V6M16 2V6M4 14V18M8 14V18" stroke-width="1"/><circle cx="14" cy="13" r="5" fill="#fff" stroke-dasharray="3 1" stroke-width="2"/><circle cx="14" cy="13" r="2"/>'],
  ['Analytical model', '<path d="M1 9L7 3H18M1 9H12V17M1 9V17M5 9V17M9 9V17M1 13H12M4 6H15" /><path d="M7 11V17M3 13V17" stroke="#c8620a"/><circle cx="16" cy="9" r="3.500" fill="#cfe7fb" stroke="#3b7ab5"/><path d="M16 13V18" stroke-width="2.500"/>'],
  ['Constraints', '<path d="M1 1V18M19 1V9M1 4H19M4 2L1 4L4 6M16 2L19 4L16 6"/><path d="M3 16H10" stroke-dasharray="2 2"/><rect x="12" y="13" width="7" height="4" fill="#6b7078"/><path d="M13.500 12V10H17.500V12"/>'],
].map(([t, b]) => btn('w-[25px]', t, s20(b))).join('');

/* Project browser tree: guide cells then content */
const dots = d => `<path d="${d}" stroke="#8a8a8a" stroke-width="1" stroke-dasharray="1 2"/>`;
const guide = {
  v: dots('M10.500 0V22'), e: '', t: dots('M10.500 0V22M11 11.500H26'), l: dots('M10.500 0V11M11 11.500H26'),
};
const box = (plus, up, down) => `${up ? dots('M10.500 0V5') : ''}${down ? dots('M10.500 18V22') : ''}${dots('M18 11.500H26')}<rect x="4.500" y="5.500" width="12" height="12" fill="url(#lg)" stroke="#8f8f8f" stroke-width="1"/><path d="M7 11.500H14${plus ? 'M10.500 8V15' : ''}" stroke="#1560a8" stroke-width="1"/>`;
const g = b => svg('h-[22px] w-[26px]', '26 22', b);
const page = svg('h-[22px] w-5', '20 22', '<rect x=".5" y="1.500" width="19" height="18" stroke="#555" stroke-width="1" stroke-dasharray="4 1"/><rect x="3.500" y="3.500" width="14" height="13" fill="#f3f4f3" stroke="#5f5f5f" stroke-width="2"/>');
const li = (guides, icon, text, pad, cls = '') => `<li class="flex h-[22px] items-center whitespace-nowrap">${guides.map(g).join('')}${icon}<span class="${pad} ${cls}">${text}</span></li>`;
const views = [];
const group = (name, kids, open, last) => {
  views.push(li([guide.v, box(!open, true, !last)], '', name, 'pl-[6px]'));
  kids.forEach((k, i) => views.push(li([guide.v, last ? guide.e : guide.v, i === kids.length - 1 ? guide.l : guide.t], page, k, k === 'Section 1' ? 'ml-[3px] px-[3px] bg-[#e3e4e6] font-bold' : 'pl-[6px]')));
};
const lv = Array.from({length: 10}, (_, i) => 'Level ' + (i + 1));
views.push(li([box(false, false, true)], svg('h-[22px] w-5', '20 22', `<path d="M1 6V2H5M15 2H19V6M1 16V20H5M15 20H19V16"/><path d="M5 8L8 5H15V14L12 17H5Z" ${L}/>`), 'Views (all)', 'pl-[6px]'));
group('Structural Plans', [], false);
group('Floor Plans', [...lv, 'Site'], true);
group('Ceiling Plans', lv, true);
group('3D Views', [], false);
group('Elevations (Building Elevati', ['East', 'North', 'South', 'West'], true);
group('Sections (Building Section', ['Section 1'], true, true);
views.push(li([guide.t], s20('<rect x="1" y="1" width="18" height="18" fill="#eee" stroke="#888"/><path d="M1 3H19" stroke-width="3"/><rect x="4" y="7" width="4" height="3" fill="#444"/><circle cx="6" cy="14" r="2" fill="#555"/><path d="M10 8H16M10 11H16M10 14H16" stroke="#888"/>'), 'Legends', 'pl-[6px]'));
views.push(li([guide.t], s20('<rect x="1" y="3" width="18" height="14" fill="#fff" stroke="#888"/><path d="M1 5H19" stroke="#666" stroke-width="4"/><path d="M1 10H19M1 13H19M6 6V17M14 6V17" stroke="#aaa" stroke-width="1"/>'), 'Schedules/Quantities (all)', 'pl-[6px]'));
views.push(li([guide.t], s20('<path d="M1 1H14L19 6V19H1Z" fill="#ddd" stroke="#666"/><path d="M4 5H12V10H8V15H4Z"/>'), 'Sheets (all)', 'pl-[6px]'));
document.getElementById('tree').innerHTML = views.join('');

/* Status bar */
const cur = '<path d="M9 6V18L12 15L14 20L16 19L14 14H18Z" fill="#fff" stroke-width="1"/>';
const combo = (label, text) => `<div class="relative w-[254px]"><select aria-label="${label}" class="h-[22px] w-full appearance-none bg-white pl-[3px] text-[14px] text-[#777777]"><option>${text}</option></select><svg class="pointer-events-none absolute top-2 right-1 h-2 w-2.5" viewBox="0 0 10 8"><path d="M1 1L5 6L9 1" fill="none" stroke="#999"/></svg></div>`;
document.getElementById('status').innerHTML =
  btn('w-[29px] pr-2', 'Worksets', s20('<path d="M7 4L9 1H13L14 5H12V8H7ZM1 9L3 7H7V19H1ZM8 10H13V19H8ZM14 8H18L19 11V19H14Z" fill="#999" stroke="#eee" stroke-width="1"/>')) +
  combo('Active workset', '') +
  `<button class="ml-[9px] flex items-center gap-[5px] text-[#222]">${s20('<path d="M6 2H17V7H6Z" fill="#ddd" stroke="#888" stroke-width="1"/><path d="M11 7V10H6V13" stroke="#888"/><path d="M1 19L3 13L7 11L10 15V19Z" fill="#888" stroke="none"/>')}<span>:0</span></button>` +
  btn('ml-[21px] w-[24px]', 'Design options', s20('<rect x="1" y="1" width="18" height="18" fill="#fff" stroke-width="2"/><path d="M1 3H19" stroke-width="3"/><path d="M4 8H7M9 11H16M9 15H16" stroke="#222" stroke-width="2"/><path d="M6 8V15H8" stroke="#222" stroke-width="1"/>')) +
  btn('ml-[7px] w-[24px]', 'Exclude options', s20('<rect x="3" y="1" width="16" height="17" fill="#8f8f94" stroke="none"/><path d="M1 12H7V9L12 14L7 19V16H1Z" fill="#999" stroke="#eee" stroke-width="1"/>')) +
  '<div class="w-[5px]"></div>' + combo('Active design option', 'Main Model') +
  '<div class="flex-1"></div>' + [
    ['Select links', `<path d="M2 5C0 2 6 1 9 4C13 1 19 1 18 5C17 9 12 8 9 5C6 9 2 8 2 5Z" stroke="#e08a14" stroke-width="2.500"/>${cur}`],
    ['Select underlay', `<path d="M1 15L9 4H18M1 17H14M3 12H16" stroke="#2d6da8"/><path d="M12 1L19 8M19 1L12 8" stroke="#b4520a" stroke-width="2.500"/>${cur}`],
    ['Select pinned', `<path d="M2 1H12V4H10V9H13V12H1V9H4V4H2ZM7 12V18" fill="#f2a13a" stroke="#a85a08" stroke-width="1"/><g transform="translate(2 0)">${cur}</g>`],
    ['Select by face', `<path d="M1 4L14 1V14L1 18Z" fill="#7dbdf5" stroke="#2d6da8"/><path d="M12 1L19 8M19 1L12 8" stroke="#b4520a" stroke-width="2.500"/>${cur}`],
    ['Drag on selection', `<path d="M6 1V12M0 6H12M4 3L6 1L8 3M4 10L6 12L8 10"/><g transform="translate(2 0)">${cur}</g>`],
    ['Background processes', '<circle cx="10" cy="10" r="6" stroke="#a3a3a3" stroke-width="4" stroke-dasharray="4 .7"/>'],
  ].map(([t, b]) => btn('w-[30px]', t, s20(b))).join('') +
  `<button class="ml-[2px] flex w-[111px] items-center text-[#444]">${s20(`<path d="M1 2H19L12 11V18H8V11Z" ${L}/>`)}:0</button>`;

/* Section drawing */
const tops = [410, 474, 538, 601, 665, 729, 793, 856, 920], G = 'fill="url(#shade)"', W = 'fill="url(#hatch)"', K = 'stroke="#000"';
const poly = (p, a) => `<polygon points="${p}" ${a}/>`, rect = (x, y, w, h, a) => `<rect x="${x}" y="${y}" width="${w}" height="${h}" ${a}/>`;
const cols = [[873,7],[907,5],[929,5],[961,6],[984,5]], shades = [[866,7],[901,6],[922,7],[954,7],[976,8]];
const door = (x, f) => rect(x + .5, 29.5, 19, 34, `fill="${f}" ${K} stroke-width="2"`) + rect(x + 4, 32.500, 12, 21, `fill="none" ${K}`) + rect(x + 10.500, 32.500, 5, 21, `fill="#808080" ${K}`) + rect(x + 4.500, 56.500, 5, 5, `fill="none" ${K}`) + rect(x + 10.500, 56.500, 5, 5, `fill="#808080" ${K}`) + `<path d="M${x + 6} 40.500H${x + 12}V36M${x + 5} 32L${x + 16} 46M${x + 1} 63L${x + 5} 56" ${K} fill="none"/>`;
/* a row of balusters standing on a slope: bars are thick/thin alternately */
const bars = (x1, y1, x2, y2, h) => {
  let p = '', q = '';
  for (let x = x1, n = 0; x < x2; x += 2.5, n++) {
    const y = y1 + (y2 - y1) * (x - x1) / (x2 - x1);
    if (n % 3 === 1) q += `M${x} ${y}V${y - h}`; else p += `M${x} ${y}V${y - h}`;
  }
  return `<path d="${p}" ${K} stroke-width="2.2"/><path d="${q}" ${K} stroke-width="1"/><path d="M${x1} ${y1 - h}L${x2} ${y2 - h}" ${K} stroke-width="1.500"/>`;
};
const floor = (i) => {
  const top = i === 0, gnd = i === 8;
  let s = '';
  /* left stair bay */
  s += rect(793, 0, 67, 64, G);
  s += rect(821, 20, 7, 34, 'fill="url(#brick)"');
  s += poly('797,38 809,36 850,63 824,63 795,44', 'fill="#fff"') + poly('796,44 830,63 812,63 796,52', 'fill="url(#rails2)"') + poly('803,40 835,57 828,60', 'fill="#a0a0a0"');
  /* left outer wall and its window */
  s += rect(783.5, 0, 5, 64, `${G} ${K}`) + rect(790.5, 0, 2, 64, `fill="#fff" ${K} stroke-width=".8"`);
  s += rect(776, 29, 7, 22, `fill="#777" ${K} stroke-width="2"`) + `<path d="M780 33L777 40L780 48" ${K} fill="none"/>`;
  /* middle bay */
  s += rect(864, 0, 146, 64, W);
  s += shades.map(([x, w]) => top ? poly(`${x},6 ${x + w},0 ${x + w},64 ${x},64`, 'fill="#808080"') : rect(x, 2, w, 62, 'fill="#808080"')).join('');
  if (!top) s += rect(864, 2, 126, 23, G);
  s += rect(989, 0, 21, 64, G);
  s += cols.map(([x, w]) => rect(x + .5, 0, w, 64, `fill="url(#brick)" ${K}`) + (top ? '' : rect(x + 1, 2, w - 1, 17, 'fill="#857a74"'))).join('');
  s += `<path d="M947.500 0V64M949.500 0V64" ${K}/>` + door(887, '#fff') + door(990, '#808080');
  /* posts and corridor */
  if (gnd) s += rect(860, 2, 9, 62, G) + rect(869.500, 2, 4, 62, 'fill="#fff" stroke="#000"') + rect(870, 30, 3, 34, 'fill="#000"') + poly('839,22 862,2 867,2 845,24', 'fill="#fff"');
  s += gnd ? rect(1014, 2, 52, 62, W) + poly('1014,2 1036,2 1014,23', G)
    : rect(1014, 0, 18, 64, G) + rect(1016.500, 0, 5, 64, `fill="#857a74" ${K}`) + rect(1032.500, 0, 3, 64, `fill="#fff" ${K}`);
  s += rect(1010.500, 0, 3, 64, `fill="#fff" ${K}`) + rect(1011, 32, 3, 32, 'fill="#000"');
  /* right bay */
  s += rect(1036, 0, 30, 64, W) + rect(1077, 0, 20, 64, W) + rect(1096, 0, 7, 64, G);
  s += top ? poly('1036,0 1103,0 1103,30 1096,20 1092,17 1084,25 1080,25 1080,14 1074,5 1036,5', G) : poly('1080,9 1096,-6 1096,14 1083,28 1080,28', G);
  if (gnd) s += poly('1080,42 1098,26 1098,64 1080,64', G);
  s += rect(1066.500, top ? 5 : 0, 10, 64, `fill="url(#brick)" ${K}`) + rect(1100, 2, 3, top ? 62 : 40, 'fill="#a08c7c"') + rect(1100, 42, 3, 20, 'fill="url(#brick)"');
  s += rect(1103.500, 0, 3, 64, `fill="#fff" ${K}`) + rect(1105, 4, 3, 47, 'fill="#000"') + rect(1108, 0, 3.5, 64, `fill="url(#brick)" ${K}`);
  s += rect(1112.500, 30, 7, 21, `fill="#fff" ${K} stroke-width="2"`) + `<path d="M1118 32L1114 40L1118 49" ${K} fill="none"/>`;
  /* slab */
  if (!top) s += rect(gnd ? 869.500 : 859.500, .5, gnd ? 166 : 176, 2, `fill="#fff" ${K}`) + `<path d="M775 .500H1126" ${K}/>`;
  return s;
};
const flight = (i) => {
  const top = i === 0, gnd = i === 8;
  let s = '';
  /* upper flight with its landing */
  s += top ? poly('801,10 859,-25 859,-3 820,14', 'fill="#000"') + `<path d="M828 5V-4M834 2V-8M841 -2V-12M848 -6V-16M854 -9V-20M813 14V6" stroke="#999"/>` : '';
  s += poly(top ? '801,10 835,-9 838,7 812,24 804,30 801,30' : '801,9 833,-9 848,0 820,17 808,26 801,30', 'fill="#000"');
  s += `<path d="M817 13V2M823 12V0M826 11V-3M835 4V-6" stroke="#999"/>`;
  s += `<path d="M794.500 11V30M797.500 11V30M799.500 10V30M793 10.500H801" ${K}/>`;
  s += bars(809, 36, 855, 62, 9) + bars(821, 42, 858, 63, 21) + poly('848,46 859,39 859,64 855,63 848,56', 'fill="#000"') + poly('805,30 812,26 820,30 820,41 809,34', 'fill="#000"');
  s += poly('819,18 854,-3 860,-3 824,21 819,21', 'fill="#fff"') + `<path d="M824 21.500L859 0M819 17.500L852 -2" ${K}/>`;
  s += rect(793.500, 29.500, 11, 3, `fill="#fff" ${K}`) + poly('804,32 809,34 857,63 850,66 804,37', 'fill="#fff"') + `<path d="M804 37.500L848 64M809 33.500L856 62.500" ${K}/>`;
  if (!gnd) s += rect(859.500, 2, 3, 62, `fill="#fff" ${K}`) + rect(860, 30, 3, 34, 'fill="#000"');
  return s;
};
const roofHalf = poly('768,403 817,374.500 841,374.500 854,365.500 865,365.500 948,318 948,325.500 831,392 804,392 773,410 768,410', 'fill="#fff"') +
  poly('804,392 831,392 820,399 793,399', `fill="#808080" ${K}`) + `<path d="M948 318L834 384.500H806M768.500 403.500L817 374.500H841L854 365.500H865M768.500 403V410.500H773.500V403.500H768.500M773 405L820 377M811 381.500H836M948 325.500L831 392.500H804L773 410.500" ${K} fill="none"/>`;
let d = `<defs>
<pattern id="hatch" width="8" height="8" patternUnits="userSpaceOnUse"><rect width="8" height="8" fill="#fff"/><path d="M-1 9L9 -1M-1 1L1 -1M7 9L9 7M-1 6L6 -1" stroke="#dedede" stroke-width="1"/></pattern>
<pattern id="shade" width="8" height="8" patternUnits="userSpaceOnUse"><rect width="8" height="8" fill="#808080"/><path d="M-1 9L9 -1M-1 1L1 -1M7 9L9 7" stroke="#727272" stroke-width="1"/></pattern>
<pattern id="brick" width="5" height="5" patternUnits="userSpaceOnUse"><rect width="5" height="5" fill="#fffdfa"/><path d="M0 .500H5M2.500 0V5" stroke="#fbd3ab" stroke-width="1"/></pattern>
<pattern id="rails2" width="4" height="8" patternUnits="userSpaceOnUse"><rect width="4" height="8" fill="#fff"/><path d="M1 0V8" stroke="#808080" stroke-width="1.5"/></pattern></defs>`;
d += rect(687.500, 298.500, 533, 707, `fill="none" ${K}`);
d += poly('948,325 831,392 783,399 783,411 1112,411 1112,399 1065,392', G) + poly('923,349 985.500,384 985.500,411 864,411 864,381.500', W);
d += poly('773,410 793,398 793,410', 'fill="#808080"') + poly('1123,410 1103,398 1103,410', 'fill="#808080"');
tops.forEach((t, i) => d += `<g transform="translate(0 ${t})">${floor(i)}</g>`);
tops.forEach((t, i) => d += `<g transform="translate(0 ${t})">${flight(i)}</g>`);
d += rect(859.500, 376, 3, 64, `fill="#fff" ${K}`) + rect(1010.500, 361, 3, 49, `fill="#fff" ${K}`) + rect(1032.500, 373, 3, 37, `fill="#fff" ${K}`);
d += roofHalf + `<g transform="translate(1896 0) scale(-1 1)">${roofHalf}</g>` + `<path d="M947.500 318V410M949.500 326V410" ${K}/>`;
d += rect(783.500, 983.500, 325, 3, `fill="#fff" ${K}`) + `<path d="M783 983.500H1124" ${K}/>`;
d += `<path d="M863 410.500H1124" ${K} stroke-dasharray="25 8 10 7"/>`;
[['A',787.5],['B',836.5],['C',898.5],['D',947.5],['E',999.5],['F',1058.5],['G',1108.5]].forEach(([n, x]) => {
  d += `<circle cx="${x}" cy="307.500" r="10.500" ${K}  fill="none"/><text x="${x}" y="311" font-size="9" text-anchor="middle">${n}</text><path d="M${x} 318V331M${x} 336V341M${x} 346V358M${x} 978V989" ${K}/>`;
});
d += `<path d="M1058.500 949V966M1058.500 970V975" ${K}/>`;
[...tops, 983].forEach((t, i) => {
  const y = t + .5;
  d += `<path d="M1124 ${y}H1126M1132 ${y}H1142M1150 ${y}H1175M1183 ${y}H1193M1200 ${y}H1224" ${K}/><text x="1218" y="${t - 3}" font-size="7" text-anchor="end" fill="#444">Level ${10 - i}</text><text x="1218" y="${t + 8}" font-size="7" text-anchor="end" fill="#444">${36 - 4 * i}.00</text><circle cx="1231" cy="${y}" r="6.500" fill="#fff" stroke="#0a3fc0"/><path d="M1231 ${y}V${y - 6.5}A6.500 6.500 0 0 0 1224.500 ${y}ZM1231 ${y}V${y + 6.5}A6.500 6.500 0 0 0 1237.500 ${y}Z" fill="#0a3fc0"/>`;
});
document.getElementById('drawing').innerHTML = `<g font-family="Liberation Sans, sans-serif">${d}</g>`;
</script>
</body>
</html>
